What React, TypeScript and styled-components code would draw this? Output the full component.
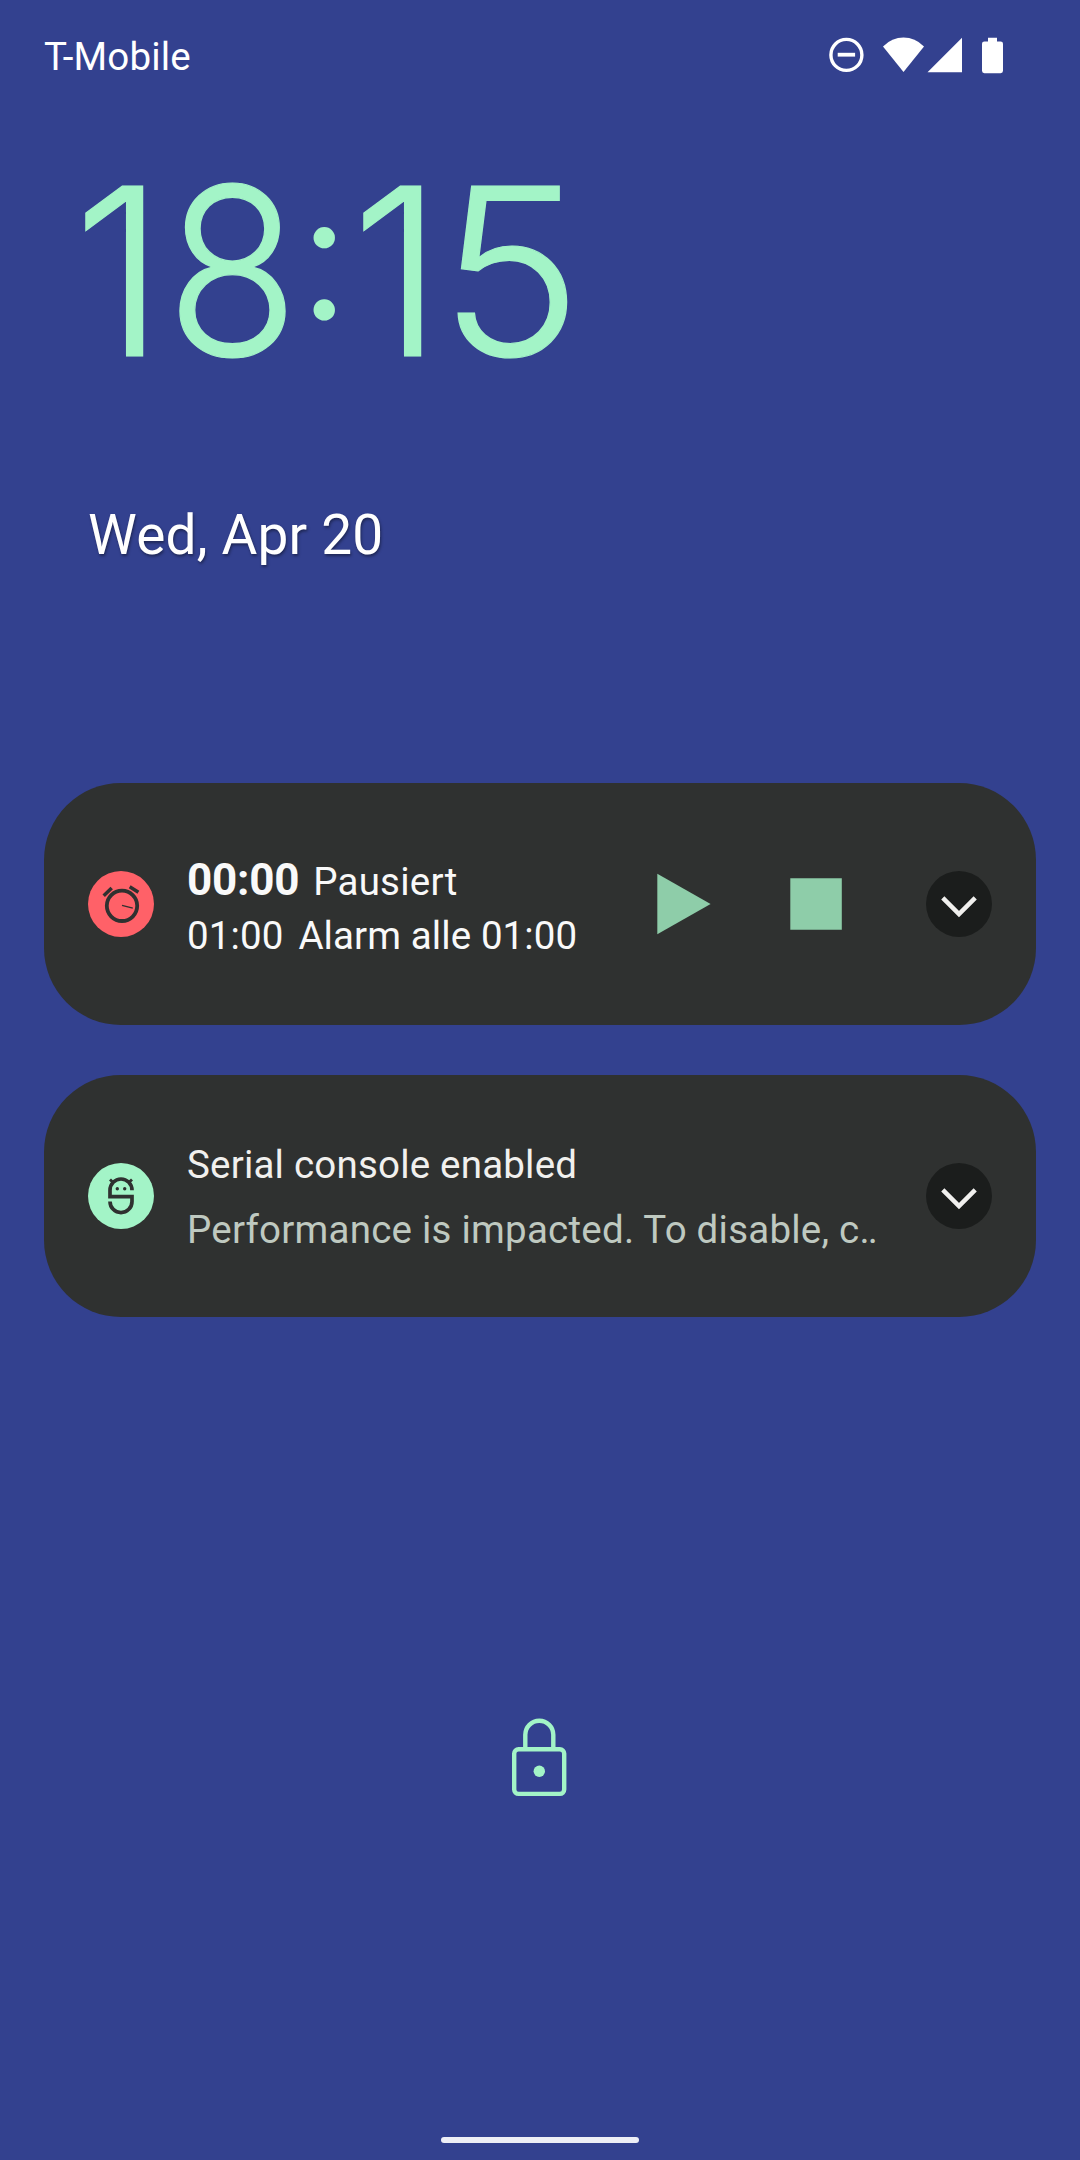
import React from "react";
import styled, { createGlobalStyle } from "styled-components";

const color = {
  wallpaper: "#33418f",
  card: "#2f3130",
  mint: "#a3f4c7",
  action: "#8ecda9",
  alarm: "#ff6168",
  expander: "#1b1d1c",
  title: "#f1f0ee",
  body: "#bfc9c0",
};

const GlobalStyle = createGlobalStyle`
  *, *::before, *::after { box-sizing: border-box; }
  body { margin: 0; background: ${color.wallpaper}; }
  svg { display: block; flex: none; }
`;

const Screen = styled.main`
  display: flex;
  flex-direction: column;
  width: 1080px;
  height: 2160px;
  overflow: hidden;
  background: ${color.wallpaper};
  color: #fff;
  font-family: Roboto, "Liberation Sans", sans-serif;
  font-size: 38.5px;
  letter-spacing: 0.17px;
`;

const StatusBar = styled.header`
  display: flex;
  align-items: center;
  justify-content: space-between;
  height: 114px;
  padding: 0 76px 0 44px;
`;

const Carrier = styled.span`
  line-height: 46px;
`;

const StatusIcons = styled.div`
  display: flex;
  align-items: center;
  padding-bottom: 5px;
`;

const Clock = styled.time`
  display: flex;
  height: 286px;
  margin-top: 13px;
  padding-left: 73px;
  color: ${color.mint};
  font-family: Inter, Roboto, sans-serif;
  font-size: 234px;
  font-weight: 300;
  letter-spacing: 0;
  line-height: 288px;
  -webkit-text-stroke: 1.2px ${color.mint};
`;

const Glyph = styled.span<{ $width: number; $stretch?: number }>`
  flex: none;
  width: ${(p) => p.$width}px;
  transform: scaleX(${(p) => p.$stretch ?? 1});
  transform-origin: left center;
`;

const Colon = styled(Glyph)`
  font-size: 172px;
  line-height: 257px;
  -webkit-text-stroke: 3.2px ${color.mint};
`;

const DateLine = styled.div`
  margin-top: 90px;
  padding-left: 88px;
  font-size: 55px;
  line-height: 64px;
  text-shadow: 1px 2px 3px rgba(0, 0, 0, 0.4);
`;

const Notifications = styled.section`
  display: flex;
  flex-direction: column;
  gap: 50px;
  margin-top: 216px;
  padding: 0 44px;
`;

const Card = styled.article`
  display: flex;
  align-items: center;
  height: 242px;
  padding: 0 44px;
  border-radius: 77px;
  background: ${color.card};
  color: ${color.title};
`;

const AppBadge = styled.div<{ $tint: string }>`
  flex: none;
  width: 66px;
  height: 66px;
  margin-right: 33px;
  border-radius: 50%;
  background: ${(p) => p.$tint};
`;

const CardText = styled.div<{ $top: number }>`
  flex: 1;
  min-width: 0;
  align-self: flex-start;
  padding-top: ${(p) => p.$top}px;
  white-space: nowrap;
`;

const TimerRow = styled.div`
  display: flex;
  align-items: baseline;
  gap: 15px;
  color: #f9f9f9;
  letter-spacing: 0.1px;
  line-height: 54px;
`;

const Elapsed = styled.strong`
  margin-right: -1px;
  font-size: 44px;
  font-weight: 700;
  letter-spacing: -0.25px;
`;

const TimerState = styled.span`
  letter-spacing: 0.25px;
`;

const Title = styled.div`
  letter-spacing: 0.2px;
  line-height: 65px;
`;

const Body = styled.div`
  color: ${color.body};
  letter-spacing: 0.23px;
  line-height: 65px;
`;

const Trail = styled.span`
  letter-spacing: -1.9px;
`;

const Actions = styled.div`
  display: flex;
  align-items: center;
  gap: 79px;
  margin-right: 84px;
`;

const Button = styled.button`
  display: block;
  flex: none;
  padding: 0;
  border: 0;
  background: none;
`;

const ExpandButton = styled(Button)`
  width: 66px;
  height: 66px;
  border-radius: 50%;
  background: ${color.expander};
`;

const LockArea = styled.div`
  display: flex;
  justify-content: center;
  margin-top: 401px;
  padding-right: 2px;
`;

const HomeHandle = styled.div`
  width: 198px;
  height: 6px;
  margin: auto auto 17px;
  border-radius: 3px;
  background: #eeeff6;
`;

const StatusGlyphs = () => (
  <svg width="176" height="38" viewBox="828 35.5 176 38" fill="#fff">
    <circle cx="846.4" cy="54.4" r="15.5" fill="none" stroke="#fff" strokeWidth="3.4" />
    <rect x="837.7" y="52.3" width="17.4" height="3.8" />
    <path d="M883 45.9Q892 37.1 903.5 37.1T924 45.9L903.5 71.5Z" />
    <path d="M962 37.3V71.8H927.5Z" />
    <path d="M988 37.3h9v3.6h3.6a2.4 2.4 0 0 1 2.4 2.4v27a2.4 2.4 0 0 1-2.4 2.4h-16.2a2.4 2.4 0 0 1-2.4-2.4v-27a2.4 2.4 0 0 1 2.4-2.4h3.6z" />
  </svg>
);

const AlarmIcon = () => (
  <svg width="66" height="66" fill="none" stroke={color.card} strokeWidth="3.5">
    <circle cx="34" cy="34.8" r="15.2" strokeWidth="3.8" />
    <path d="M15.7 24.7L23.7 16.9M41.7 15.8L50.4 21.2" />
    <path d="M34 34.4L44.8 37.1" strokeWidth="1.4" />
  </svg>
);

const ConsoleIcon = () => (
  <svg width="66" height="66" fill="none" stroke={color.card} strokeWidth="3.7">
    <path d="M44 27.2A11 11.2 0 0 0 22 27.2V33.7H44V38.4A11 11.2 0 0 1 22 38.4" />
    <path d="M22 16.4L25.4 19.8M44 16.4L40.6 19.8" strokeWidth="2.8" />
    <circle cx="29.3" cy="25.7" r="1.7" fill={color.card} stroke="none" />
    <circle cx="36.7" cy="25.7" r="1.7" fill={color.card} stroke="none" />
  </svg>
);

const Chevron = () => (
  <svg width="66" height="66" fill="none" stroke={color.title} strokeWidth="4.5">
    <path d="M16.8 26.9L33 43L49.2 26.9" />
  </svg>
);

const LockIcon = () => (
  <svg width="56" height="80" viewBox="511 1718 56 80" fill="none" stroke={color.mint} strokeWidth="4.4">
    <rect x="514.2" y="1749.2" width="50" height="44.7" rx="4.4" />
    <path d="M525.3 1749V1734.8a14 14 0 0 1 28 0V1749" />
    <circle cx="539.3" cy="1771.2" r="5.7" fill={color.mint} stroke="none" />
  </svg>
);

const Expand = () => (
  <ExpandButton aria-label="Expand">
    <Chevron />
  </ExpandButton>
);

export default function App() {
  return (
    <Screen>
      <GlobalStyle />
      <StatusBar>
        <Carrier>T-Mobile</Carrier>
        <StatusIcons>
          <StatusGlyphs />
        </StatusIcons>
      </StatusBar>

      <Clock>
        <Glyph $width={93}>1</Glyph>
        <Glyph $width={134} $stretch={0.93}>8</Glyph>
        <Colon $width={51}>:</Colon>
        <Glyph $width={88}>1</Glyph>
        <Glyph $width={134} $stretch={1.03}>5</Glyph>
      </Clock>
      <DateLine>Wed, Apr 20</DateLine>

      <Notifications>
        <Card>
          <AppBadge $tint={color.alarm}>
            <AlarmIcon />
          </AppBadge>
          <CardText $top={70}>
            <TimerRow>
              <Elapsed>00:00</Elapsed>
              <TimerState>Pausiert</TimerState>
            </TimerRow>
            <TimerRow>
              <span>01:00</span>
              <span>Alarm alle 01:00</span>
            </TimerRow>
          </CardText>
          <Actions>
            <Button aria-label="Resume">
              <svg width="54" height="62" fill={color.action}>
                <path d="M0.3 0.7L53.6 31L0.3 61.3Z" />
              </svg>
            </Button>
            <Button aria-label="Stop">
              <svg width="52" height="52" fill={color.action}>
                <path d="M0.3 0.2H51.8V51.8H0.3Z" />
              </svg>
            </Button>
          </Actions>
          <Expand />
        </Card>

        <Card>
          <AppBadge $tint={color.mint}>
            <ConsoleIcon />
          </AppBadge>
          <CardText $top={57}>
            <Title>Serial console enabled</Title>
            <Body>
              Performance is impacted. To disable, c<Trail>..</Trail>
            </Body>
          </CardText>
          <Expand />
        </Card>
      </Notifications>

      <LockArea>
        <LockIcon />
      </LockArea>
      <HomeHandle />
    </Screen>
  );
}
